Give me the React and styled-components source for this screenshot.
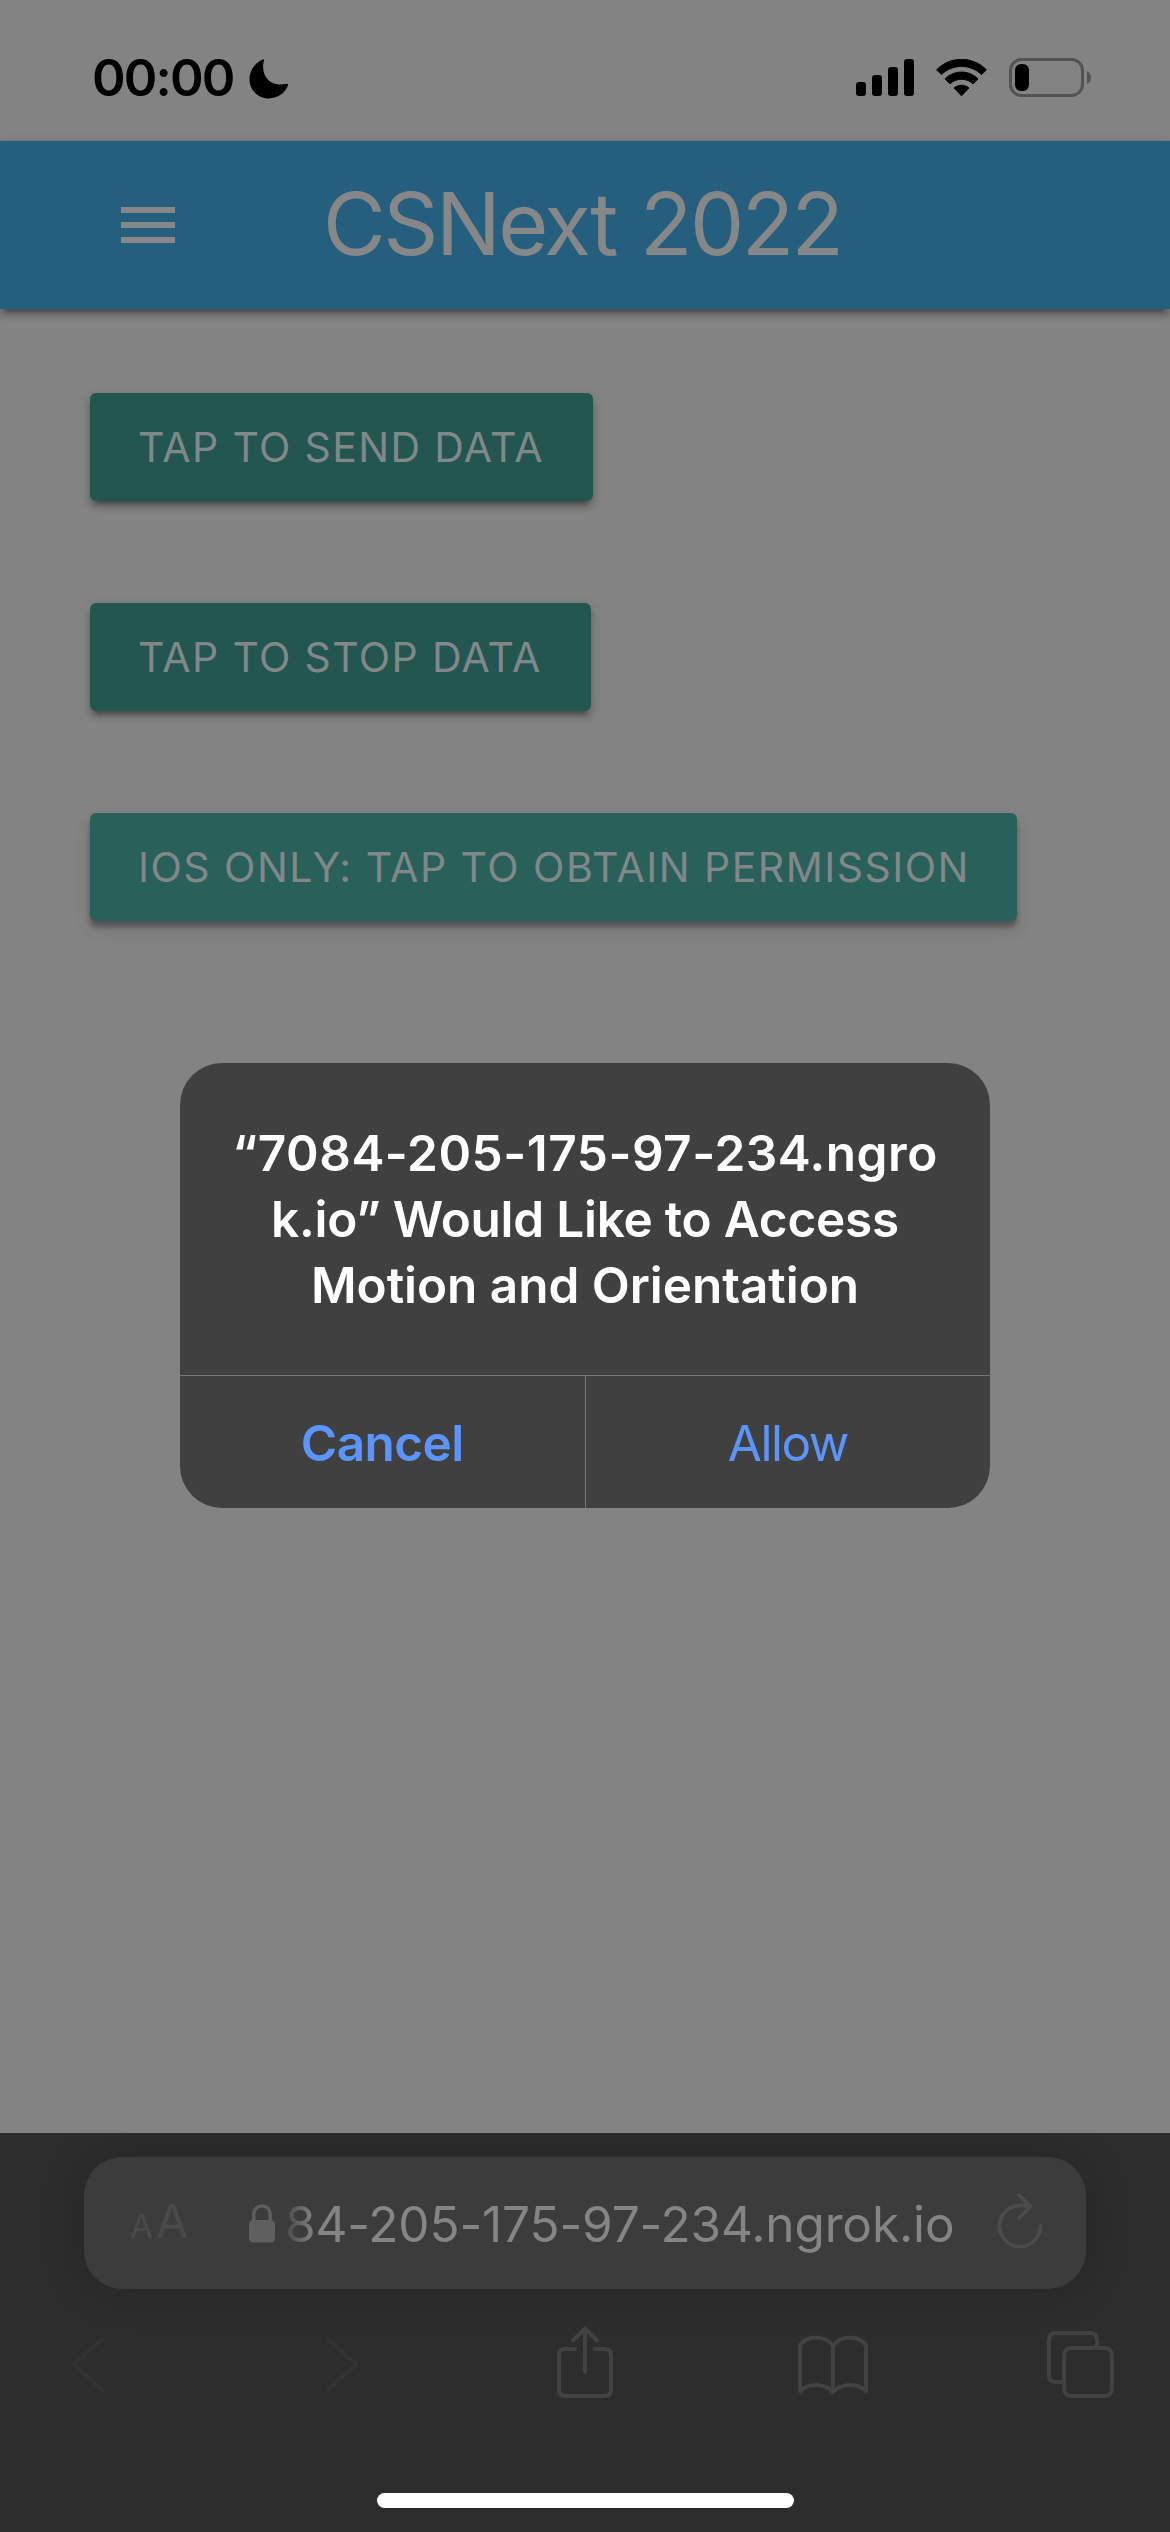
import React from "react";
import styled, { createGlobalStyle } from "styled-components";

const GlobalStyle = createGlobalStyle`
  * { box-sizing: border-box; }
  body {
    margin: 0;
    background: #838383;
    font-family: Inter, "Liberation Sans", sans-serif;
  }
`;

const Screen = styled.div`
  position: relative;
  display: flex;
  flex-direction: column;
  width: 1170px;
  height: 2532px;
  overflow: hidden;
  background: #838383;
`;

const StatusBar = styled.div`
  display: flex;
  align-items: center;
  height: 141px;
  padding: 16px 78px 0 92px;
  color: #000;
  border-bottom: 1px solid #77797c;
`;

const Clock = styled.span`
  font-size: 51px;
  font-weight: 600;
  line-height: 62px;
  letter-spacing: -1.87px;
`;

const Moon = styled.svg`
  margin: 1px auto 0 16px;
`;

const StatusIcons = styled.div`
  display: flex;
  align-items: center;
  gap: 22px;
`;

const Header = styled.header`
  display: flex;
  align-items: center;
  height: 168px;
  flex: none;
  padding: 0 0 2px 121px;
  background: #265e7e;
  box-shadow: 0 6px 6px 0 rgba(0, 0, 0, 0.22), 0 3px 12px rgba(0, 0, 0, 0.1), 0 9px 3px -6px rgba(0, 0, 0, 0.2);
`;

const MenuButton = styled.div`
  display: flex;
  flex-direction: column;
  gap: 9px;
  width: 54px;
  margin-top: 2px;
`;

const MenuLine = styled.span`
  height: 6px;
  background: #868789;
`;

const Title = styled.h1`
  margin: 0 0 0 148px;
  font-size: 86px;
  font-weight: 400;
  line-height: 160px;
  letter-spacing: -2.5px;
  word-spacing: 2.5px;
  white-space: nowrap;
  color: #868789;
`;

const Content = styled.main`
  display: flex;
  flex-direction: column;
  align-items: flex-start;
  gap: 102px;
  flex: 1;
  padding: 84px 90px 0;
`;

const ActionButton = styled.button`
  width: ${(p) => p.$width}px;
  height: 108px;
  padding: 0 0 0 48px;
  border: 0;
  border-radius: 6px;
  background: ${(p) => (p.$active ? "#2a605a" : "#23564f")};
  box-shadow: ${(p) =>
    p.$active
      ? "0 6px 5px rgba(0,0,0,.3), 0 9px 18px rgba(0,0,0,.1)"
      : "0 6px 6px rgba(0,0,0,.2), 0 3px 12px rgba(0,0,0,.12), 0 9px 3px -6px rgba(0,0,0,.2)"};
  color: #80888a;
  font: 400 41px/108px Inter, "Liberation Sans", sans-serif;
  letter-spacing: ${(p) => p.$spacing}px;
  text-align: left;
  white-space: nowrap;
`;

const Dialog = styled.section`
  position: absolute;
  left: 180px;
  top: 1063px;
  display: flex;
  flex-direction: column;
  width: 810px;
  height: 445px;
  border-radius: 42px;
  overflow: hidden;
  background: #404040;
`;

const DialogTitle = styled.div`
  flex: 1;
  padding-top: 57px;
  color: #fff;
  font-size: 49.5px;
  font-weight: 600;
  line-height: 66px;
  text-align: center;
  white-space: nowrap;
`;

const DialogLine = styled.div`
  letter-spacing: ${(p) => p.$spacing}px;
`;

const DialogActions = styled.div`
  display: flex;
  height: 133px;
  border-top: 1px solid #787878;
`;

const DialogAction = styled.button`
  flex: 1;
  padding: 2px 0 0;
  border: 0;
  background: none;
  color: #5b94fb;
  font: ${(p) => (p.$strong ? 600 : 400)} 49.5px/130px Inter, "Liberation Sans", sans-serif;
  letter-spacing: ${(p) => p.$spacing}px;

  & + & {
    border-left: 1px solid #787878;
  }
`;

const BrowserBar = styled.footer`
  display: flex;
  flex-direction: column;
  align-items: center;
  height: 399px;
  padding-top: 24px;
  overflow: hidden;
  background: #2d2d2d;
`;

const AddressField = styled.div`
  display: flex;
  align-items: center;
  flex: none;
  width: 1002px;
  height: 132px;
  padding: 0 43px 0 46px;
  border-radius: 38px;
  background: #3c3c3c;
  box-shadow: 0 0 44px rgba(0, 0, 0, 0.18);
`;

const TextSize = styled.div`
  display: flex;
  align-items: baseline;
  gap: 3px;
  width: 60px;
  color: #4a4a4a;
  line-height: 60px;
`;

const Letter = styled.span`
  font-size: ${(p) => p.$size}px;
`;

const Lock = styled.svg`
  margin-left: 59px;
`;

const Url = styled.span`
  margin: 1px 0 0 10px;
  color: #858585;
  font-size: 49.5px;
  line-height: 66px;
  letter-spacing: -0.13px;
  white-space: nowrap;
  mask-image: linear-gradient(to right, rgba(0, 0, 0, 0.15), #000 30px);
`;

const Reload = styled.svg`
  margin-left: auto;
  margin-top: -6px;
`;

const Toolbar = styled.nav`
  display: grid;
  grid-template-columns: 254px 232px 241px 249px 69px;
  align-items: center;
  width: 100%;
  height: 150px;
  padding-left: 70px;
`;

const HomeIndicator = styled.div`
  width: 417px;
  height: 15px;
  margin-top: 54px;
  border-radius: 8px;
  background: #fff;
`;

const Tool = ({ width, color = "#424242", children }) => (
  <svg width={width} height="76" viewBox={`0 0 ${width} 76`} fill="none" stroke={color} strokeWidth="4" strokeLinecap="round" strokeLinejoin="round">
    {children}
  </svg>
);

export default function App() {
  return (
    <Screen>
      <GlobalStyle />
      <StatusBar>
        <Clock>00:00</Clock>
        <Moon width="40" height="40" viewBox="0 0 40 40">
          <path d="M15.300.4C13.800 4.400 13.700 10 15.200 14.600C18 22.500 26 27.500 37.500 24.800Q39.600 24.700 39 26.600C36 34.200 28.600 39.400 20 39.400C9 39.400.5 31 .5 20.200C.5 11.800 5.600 4 13.200.8Q14.800-.2 15.300.4Z" />
        </Moon>
        <StatusIcons>
          <svg width="58" height="38" viewBox="0 0 58 38">
            <rect x="0" y="23" width="10" height="14" rx="3" />
            <rect x="16" y="16" width="10" height="21" rx="3" />
            <rect x="32" y="8" width="10" height="29" rx="3" />
            <rect x="48" y="0" width="10" height="37" rx="3" />
          </svg>
          <svg width="51" height="38" viewBox="0 0 51 38">
            <path d="M0.600 10.800C14.500-3.200 36.500-3.200 50.400 10.800L45.600 15.600C34.400 4.700 16.600 4.700 5.400 15.600Z" stroke="#000" strokeWidth="1" strokeLinejoin="round" />
            <path d="M9 19.900C18.200 10.800 32.800 10.800 42 19.900L37 24.900C30.600 18.700 20.400 18.700 14 24.900Z" stroke="#000" strokeWidth="1" strokeLinejoin="round" />
            <path d="M18 29C22.300 25.300 28.700 25.300 33 29L25.500 36.800Z" stroke="#000" strokeWidth="1" strokeLinejoin="round" />
          </svg>
          <svg width="83" height="40" viewBox="0 0 83 40">
            <rect x="1.500" y="1.500" width="72" height="36" rx="11" fill="none" stroke="#535353" strokeWidth="3" />
            <rect x="6" y="6" width="14" height="27" rx="6" />
            <path d="M78 13C83.300 16 83.300 23 78 26Z" fill="#535353" />
          </svg>
        </StatusIcons>
      </StatusBar>
      <Header>
        <MenuButton>
          <MenuLine />
          <MenuLine />
          <MenuLine />
        </MenuButton>
        <Title>CSNext 2022</Title>
      </Header>
      <Content>
        <ActionButton $width={503} $spacing={1.35}>TAP TO SEND DATA</ActionButton>
        <ActionButton $width={501} $spacing={1.35}>TAP TO STOP DATA</ActionButton>
        <ActionButton $width={927} $spacing={1.48} $active>IOS ONLY: TAP TO OBTAIN PERMISSION</ActionButton>
      </Content>
      <Dialog role="alertdialog">
        <DialogTitle>
          <DialogLine $spacing={0.5}>“7084-205-175-97-234.ngro</DialogLine>
          <DialogLine $spacing={-0.23}>k.io” Would Like to Access</DialogLine>
          <DialogLine $spacing={-0.03}>Motion and Orientation</DialogLine>
        </DialogTitle>
        <DialogActions>
          <DialogAction $strong $spacing={-0.58}>Cancel</DialogAction>
          <DialogAction $spacing={-1.48}>Allow</DialogAction>
        </DialogActions>
      </Dialog>
      <BrowserBar>
        <AddressField>
          <TextSize>
            <Letter $size={33}>A</Letter>
            <Letter $size={47}>A</Letter>
          </TextSize>
          <Lock width="26" height="39" viewBox="0 0 26 39">
            <rect x="0" y="16" width="26" height="22.500" rx="4.500" fill="#5f5f5f" />
            <path d="M4.800 18V10.500C4.800 -1 21.200 -1 21.200 10.500V18" fill="none" stroke="#5f5f5f" strokeWidth="3.400" />
          </Lock>
          <Url>84-205-175-97-234.ngrok.io</Url>
          <Reload width="46" height="60" viewBox="0 0 46 60" fill="none" stroke="#4c4c4c" strokeWidth="3.600" strokeLinecap="round" strokeLinejoin="round">
            <path d="M43.500 35.500A20.500 20.500 0 1 1 23 15.500C26.500 15.300 30 15.500 33 16.200M22 5L33.500 16.500L22 28" />
          </Reload>
        </AddressField>
        <Toolbar>
          <Tool width={36} color="#323232"><path d="M32 13L4 38.500L32 64" /></Tool>
          <Tool width={36} color="#323232"><path d="M4 13L32 38.500L4 64" /></Tool>
          <Tool width={58}>
            <path d="M19 23H9Q3 23 3 29V64Q3 70 9 70H49Q55 70 55 64V29Q55 23 49 23H39M29 46V4M17 14.500L29 2.500L41 14.500" />
          </Tool>
          <Tool width={72}>
            <path d="M36 20V65M36 20C29 9 11 9 3 19V65C12 57 28 57 36 66C44 57 60 57 69 65V19C61 9 43 9 36 20Z" />
          </Tool>
          <Tool width={69}>
            <path d="M18 56H10Q3 56 3 49V14Q3 7 10 7H44Q51 7 51 14V21" />
            <rect x="18" y="22" width="48" height="48" rx="7" />
          </Tool>
        </Toolbar>
        <HomeIndicator />
      </BrowserBar>
    </Screen>
  );
}
